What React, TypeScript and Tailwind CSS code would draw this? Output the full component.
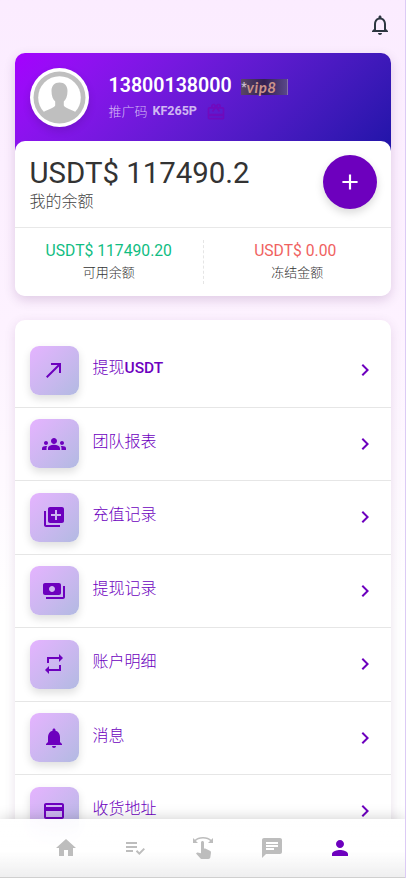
import type { IconType } from "react-icons";
import {
  MdAdd,
  MdCallMade,
  MdChat,
  MdChevronRight,
  MdGroups,
  MdHome,
  MdLibraryAdd,
  MdNotifications,
  MdNotificationsNone,
  MdOutlineCardGiftcard,
  MdPayment,
  MdPayments,
  MdPerson,
  MdPlaylistAddCheck,
  MdRepeat,
  MdSwipe,
} from "react-icons/md";

interface MenuItem {
  label: string;
  unit?: string;
  icon: IconType;
}

const MENU: MenuItem[] = [
  { label: "提现", unit: "USDT", icon: MdCallMade },
  { label: "团队报表", icon: MdGroups },
  { label: "充值记录", icon: MdLibraryAdd },
  { label: "提现记录", icon: MdPayments },
  { label: "账户明细", icon: MdRepeat },
  { label: "消息", icon: MdNotifications },
  { label: "收货地址", icon: MdPayment },
];

const TABS = [
  { id: "home", icon: MdHome },
  { id: "tasks", icon: MdPlaylistAddCheck },
  { id: "grab", icon: MdSwipe },
  { id: "chat", icon: MdChat },
  { id: "me", icon: MdPerson },
];

function Avatar() {
  return (
    <div className="h-[59px] w-[59px] shrink-0 rounded-full bg-white p-[3px] shadow-[0_4px_8px_rgba(0,0,0,0.12)]">
      <svg viewBox="0 0 53 53" className="block h-full w-full">
        <defs>
          <clipPath id="avatar-clip">
            <circle cx="26.5" cy="26.5" r="25" />
          </clipPath>
        </defs>
        <circle cx="26.5" cy="26.5" r="26" fill="#bfbfbf" />
        <circle cx="26.5" cy="26.5" r="21.3" fill="#fff" />
        <path
          clipPath="url(#avatar-clip)"
          fill="#bfbfbf"
          d="M26.5 11.500c-5 0-8 3.200-8 8.500 0 5 1.500 8.500 3.700 10.500v4c-1.500 2.500-7 4-11.700 6.500L8 50h37l-2.500-9c-4.700-2.500-10.200-4-11.700-6.500v-4c2.200-2 3.700-5.500 3.700-10.500 0-5.300-3-8.500-8-8.500z"
        />
      </svg>
    </div>
  );
}

function VipBadge() {
  return (
    <span className="flex h-4 w-[47px] border-r border-[#8872a8] bg-linear-to-r from-[#5b4665] via-[#332052] to-[#594889]">
      <span className="text-[12px] leading-4 font-bold text-[#c9bcd0]">*</span>
      <span className="font-['Lato'] text-[15px] leading-4 font-bold tracking-[0.5px] text-[#cc948a] italic">
        vip8
      </span>
    </span>
  );
}

function Profile() {
  return (
    <div className="flex h-[88px] items-center pl-[14.500px]">
      <Avatar />
      <div className="ml-5 flex flex-col">
        <div className="flex h-[26px] items-center pt-[4px]">
          <span className="text-[19.600px] leading-6 font-semibold text-white">13800138000</span>
          <span className="mt-[3px] ml-[9.500px]">
            <VipBadge />
          </span>
        </div>
        <div className="mt-[3px] flex h-6 items-center text-[13px] text-white/70">
          <span className="font-light">推广码</span>
          <span className="ml-[5px] text-[12.500px] font-bold">KF265P</span>
          <MdOutlineCardGiftcard className="ml-[9px] h-5 w-5 text-[#7c00b4] opacity-60" />
        </div>
      </div>
    </div>
  );
}

function Balance() {
  return (
    <div className="rounded-[10px] bg-white">
      <div className="flex h-[87px] justify-between border-b border-[#e8e8e8] px-[14.500px]">
        <div className="pt-[14px]">
          <div className="text-[29.400px] leading-9 text-[#333]">USDT$ 117490.2</div>
          <div className="pt-px text-[16px] leading-5 font-light text-[#444]">我的余额</div>
        </div>
        <button className="mt-[14px] flex h-[54px] w-[54px] items-center justify-center rounded-full bg-[#6d00be] text-white shadow-[0_4px_8px_rgba(0,0,0,0.15)]">
          <MdAdd className="h-[26px] w-[26px]" />
        </button>
      </div>
      <div className="flex h-[68px] py-3 text-center">
        <div className="flex-1 border-r border-dashed border-[#e5e5e5]">
          <div className="text-[15.700px] leading-[22px] text-[#10bd82]">USDT$ 117490.20</div>
          <div className="text-[13px] leading-[21px] font-light text-[#333]">可用余额</div>
        </div>
        <div className="flex-1">
          <div className="pr-1 text-[15.700px] leading-[22px] text-[#f0625f]">USDT$ 0.00</div>
          <div className="text-[13px] leading-[21px] font-light text-[#333]">冻结金额</div>
        </div>
      </div>
    </div>
  );
}

function MenuRow({ label, unit, icon: Icon }: MenuItem) {
  return (
    <li className="flex h-[73.500px] items-center border-b border-[#e6e6e6] px-[14.500px] text-[#6d00be]">
      <span className="flex h-[49px] w-[49px] items-center justify-center rounded-[9px] bg-linear-135 from-[#e5b3ff] to-[#b2bae2] shadow-[0_4px_8px_rgba(0,0,0,0.13)]">
        <Icon className="h-6 w-6" />
      </span>
      <span className="mb-[4px] ml-[14px] flex-1 text-[16px] font-light">
        {label}
        {unit && <span className="text-[15.500px] font-medium">{unit}</span>}
      </span>
      <MdChevronRight className="h-6 w-6" />
    </li>
  );
}

export default function App() {
  return (
    <div className="relative flex h-[878px] w-full flex-col overflow-hidden border-r border-[#dccbf5] bg-linear-to-b from-[#fbecff] via-[#fdf2ff] via-37% to-white to-70% font-[Roboto,'Noto_Sans_CJK_SC',sans-serif]">
      <header className="flex h-[53px] shrink-0 items-center justify-end pr-[13.500px] pb-[3px]">
        <MdNotificationsNone className="h-6 w-6 text-[#2c3640]" />
      </header>

      <section className="mr-[14px] ml-[15px] shrink-0 rounded-[10px] bg-linear-135 from-[#a500ff] to-[#000f9c] bg-[length:100%_165px] bg-no-repeat shadow-[0_4px_12px_rgba(70,0,90,0.16)]">
        <Profile />
        <Balance />
      </section>

      <ul className="mt-6 mr-[14px] ml-[15px] shrink-0 rounded-t-[10px] bg-white pt-[14px] shadow-[0_3px_12px_rgba(70,0,90,0.12)]">
        {MENU.map((item) => (
          <MenuRow key={item.label} {...item} />
        ))}
      </ul>

      <nav className="absolute inset-x-0 bottom-0 flex h-[59px] items-center justify-between border-b border-[#cfcfcf] bg-linear-to-b from-white/92 via-white/97 via-55% to-[#eeeeef]/95 px-[53px] pb-px pl-[54px] shadow-[0_0_14px_rgba(0,0,0,0.2)] backdrop-blur-md">
        {TABS.map(({ id, icon: Icon }) => (
          <Icon key={id} className={id === "me" ? "h-6 w-6 text-[#6d00be]" : "h-6 w-6 text-[#bdbdbd]"} />
        ))}
      </nav>
    </div>
  );
}
